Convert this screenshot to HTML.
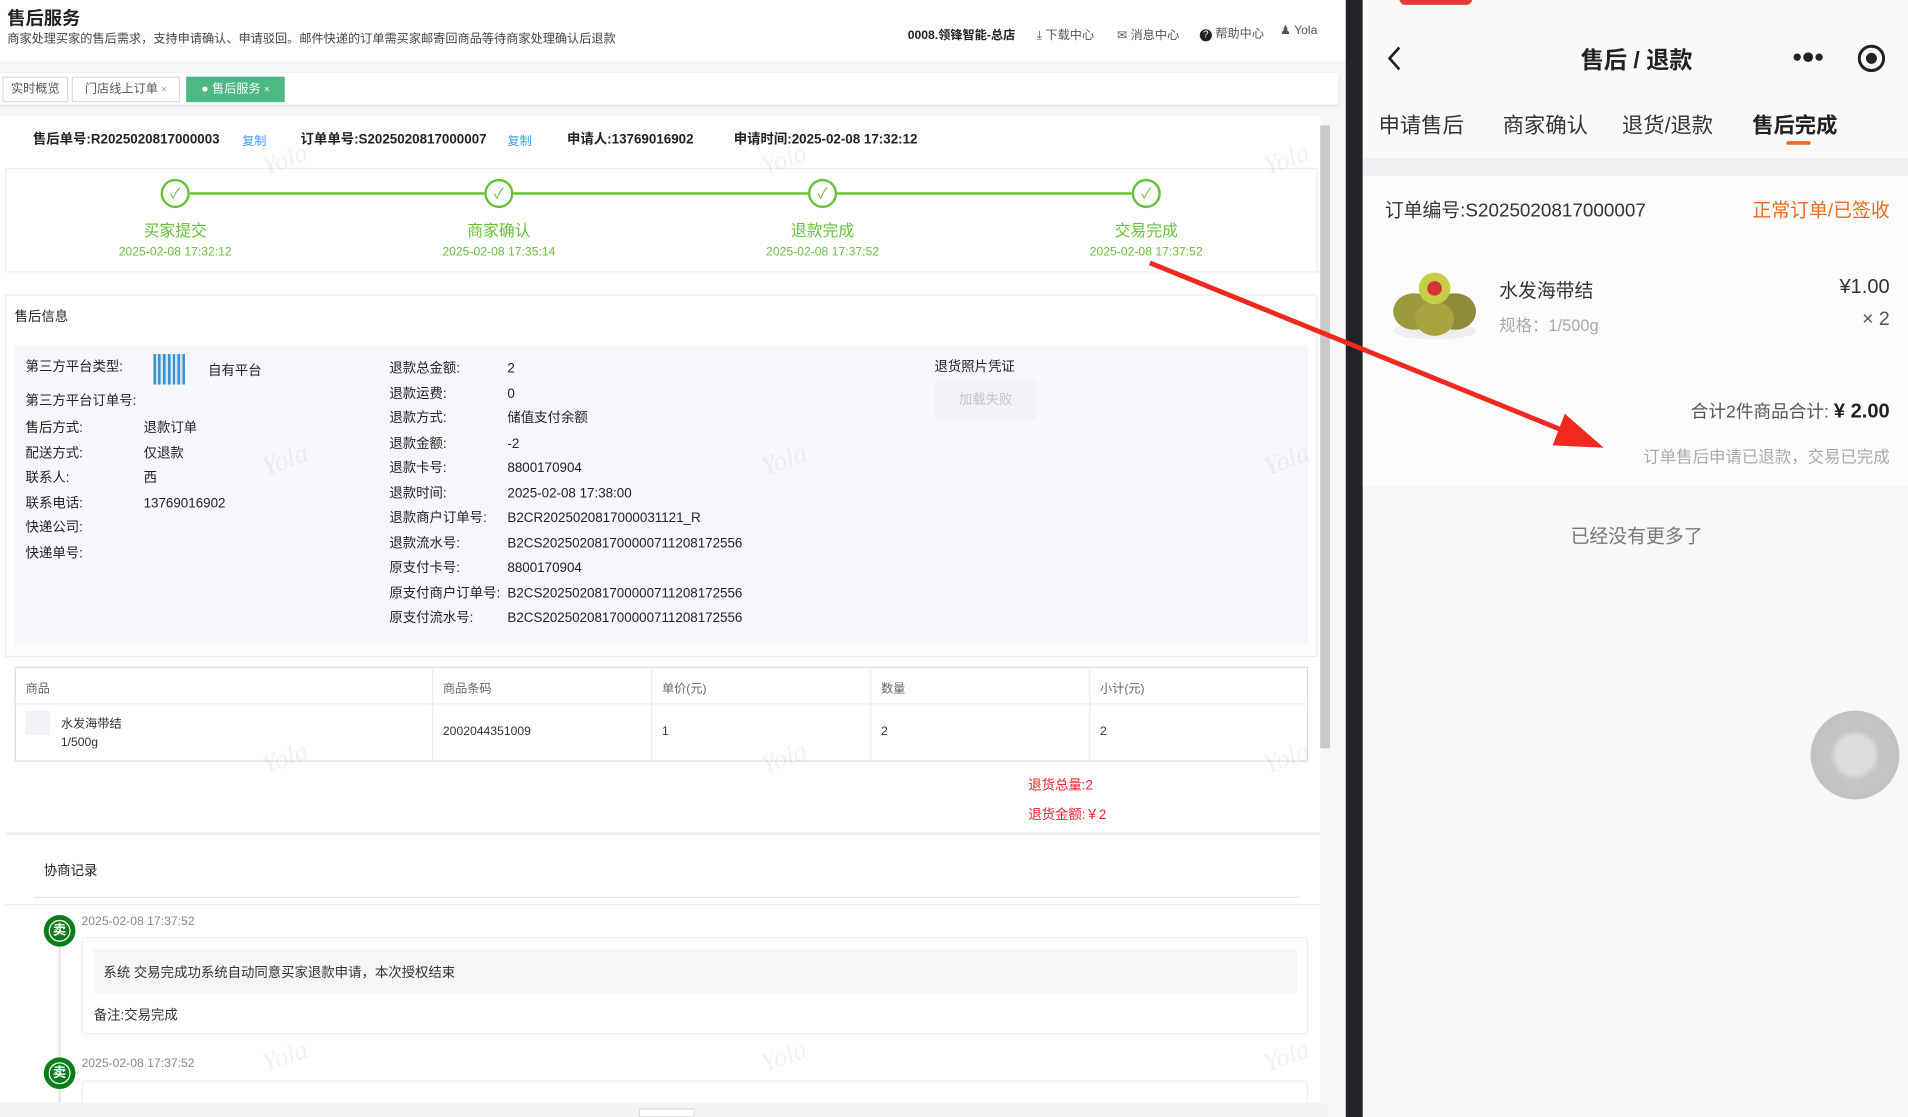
<!DOCTYPE html>
<html><head><meta charset="utf-8">
<style>
*{margin:0;padding:0;box-sizing:border-box}
html,body{width:1908px;height:1117px;overflow:hidden;background:#fff}
#w{position:absolute;left:0;top:0;width:1568px;height:918px;transform:scale(1.2168);transform-origin:0 0;font-family:"Liberation Sans","Noto Sans CJK SC",sans-serif;color:#333}
.a{position:absolute;white-space:nowrap}
.s10{font-size:10px}.s11{font-size:11px}
.g{color:#67c23a}
.wm{position:absolute;color:rgba(0,0,0,0.05);font:italic 22px "Liberation Serif",serif;transform:rotate(-20deg)}
</style></head><body><div id="w">
<div class="a" style="left:0;top:0;width:1106px;height:918px;background:#f5f6f8"></div>
<div class="a" style="left:0;top:0;width:1106px;height:50px;background:#fff"></div>
<div class="a" style="left:6px;top:4px;font-size:15px;font-weight:bold;color:#222">售后服务</div>
<div class="a s10" style="left:6px;top:23px;color:#444">商家处理买家的售后需求，支持申请确认、申请驳回。邮件快递的订单需买家邮寄回商品等待商家处理确认后退款</div>
<div class="a s10" style="left:746px;top:20px;font-weight:bold;color:#222">0008.领锋智能-总店</div>
<div class="a s10" style="left:852px;top:20px;color:#555">⤓ 下载中心</div>
<div class="a s10" style="left:918px;top:20px;color:#555">✉ 消息中心</div>
<div class="a s10" style="left:986px;top:19px;color:#555"><span style="display:inline-block;width:10px;height:10px;border-radius:50%;background:#222;color:#fff;font-size:8px;text-align:center;line-height:10px">?</span> 帮助中心</div>
<div class="a s10" style="left:1052px;top:20px;color:#555">♟ Yola</div>
<div class="a" style="left:0;top:60px;width:1100px;height:26px;background:#fff;box-shadow:0 1px 3px rgba(0,0,0,.1)"></div>
<div class="a s10" style="left:2px;top:63px;width:54px;height:21px;border:1px solid #ddd;line-height:19px;text-align:center;color:#555">实时概览</div>
<div class="a s10" style="left:59px;top:63px;width:89px;height:21px;border:1px solid #ddd;line-height:19px;text-align:center;color:#555">门店线上订单 <span style="font-size:8px;color:#999">×</span></div>
<div class="a s10" style="left:153px;top:63px;width:81px;height:21px;background:#4cb884;line-height:21px;text-align:center;color:#fff">● 售后服务 <span style="font-size:8px">×</span></div>
<div class="a" style="left:0;top:95px;width:1085px;height:811px;background:#fff"></div>
<div class="a" style="left:1085px;top:103px;width:8px;height:512px;background:#c8c8c8"></div>
<div class="a s11" style="left:27px;top:106px;font-weight:bold;color:#222">售后单号:R2025020817000003</div>
<div class="a s10" style="left:199px;top:107px;color:#409eff">复制</div>
<div class="a s11" style="left:247px;top:106px;font-weight:bold;color:#222">订单单号:S2025020817000007</div>
<div class="a s10" style="left:417px;top:107px;color:#409eff">复制</div>
<div class="a s11" style="left:466px;top:106px;font-weight:bold;color:#222">申请人:13769016902</div>
<div class="a s11" style="left:603px;top:106px;font-weight:bold;color:#222">申请时间:2025-02-08 17:32:12</div>
<div class="a" style="left:4px;top:138px;width:1079px;height:86px;border:1px solid #eceef2"></div>
<div class="a" style="left:156px;top:158px;width:242px;height:2px;background:#67c23a"></div>
<div class="a" style="left:422px;top:158px;width:242px;height:2px;background:#67c23a"></div>
<div class="a" style="left:688px;top:158px;width:242px;height:2px;background:#67c23a"></div>
<div class="a" style="left:132px;top:147px;width:24px;height:24px;border:2px solid #67c23a;border-radius:50%;background:#fff;color:#67c23a;text-align:center;line-height:20px;font-size:12px">✓</div>
<div class="a" style="left:398px;top:147px;width:24px;height:24px;border:2px solid #67c23a;border-radius:50%;background:#fff;color:#67c23a;text-align:center;line-height:20px;font-size:12px">✓</div>
<div class="a" style="left:664px;top:147px;width:24px;height:24px;border:2px solid #67c23a;border-radius:50%;background:#fff;color:#67c23a;text-align:center;line-height:20px;font-size:12px">✓</div>
<div class="a" style="left:930px;top:147px;width:24px;height:24px;border:2px solid #67c23a;border-radius:50%;background:#fff;color:#67c23a;text-align:center;line-height:20px;font-size:12px">✓</div>
<div class="a g" style="left:94px;top:179px;width:100px;text-align:center;font-size:13px">买家提交</div>
<div class="a g" style="left:360px;top:179px;width:100px;text-align:center;font-size:13px">商家确认</div>
<div class="a g" style="left:626px;top:179px;width:100px;text-align:center;font-size:13px">退款完成</div>
<div class="a g" style="left:892px;top:179px;width:100px;text-align:center;font-size:13px">交易完成</div>
<div class="a g" style="left:84px;top:202px;width:120px;text-align:center;font-size:10px">2025-02-08 17:32:12</div>
<div class="a g" style="left:350px;top:202px;width:120px;text-align:center;font-size:10px">2025-02-08 17:35:14</div>
<div class="a g" style="left:616px;top:202px;width:120px;text-align:center;font-size:10px">2025-02-08 17:37:52</div>
<div class="a g" style="left:882px;top:202px;width:120px;text-align:center;font-size:10px">2025-02-08 17:37:52</div>
<div class="a" style="left:4px;top:242px;width:1079px;height:298px;border:1px solid #eceef2"></div>
<div class="a s11" style="left:12px;top:252px;color:#222">售后信息</div>
<div class="a" style="left:12px;top:284px;width:1063px;height:246px;background:#f5f7fa"></div>
<div class="a s11" style="left:21px;top:293px;color:#222">第三方平台类型:</div>
<div class="a s11" style="left:21px;top:321px;color:#222">第三方平台订单号:</div>
<div class="a s11" style="left:21px;top:342px;line-height:20.5px;color:#222">售后方式:<br>配送方式:<br>联系人:<br>联系电话:<br>快递公司:<br>快递单号:</div>
<div class="a" style="left:126px;top:291px;width:26px;height:25px;background:repeating-linear-gradient(90deg,#3a8fd0 0 2px,#cfe4f5 2px 4px)"></div>
<div class="a s11" style="left:171px;top:296px;color:#222">自有平台</div>
<div class="a s11" style="left:118px;top:342px;line-height:20.5px;color:#222">退款订单<br>仅退款<br>西<br>13769016902</div>
<div class="a s11" style="left:320px;top:293px;line-height:20.5px;color:#222">退款总金额:<br>退款运费:<br>退款方式:<br>退款金额:<br>退款卡号:<br>退款时间:<br>退款商户订单号:<br>退款流水号:<br>原支付卡号:<br>原支付商户订单号:<br>原支付流水号:</div>
<div class="a s11" style="left:417px;top:293px;line-height:20.5px;color:#222">2<br>0<br>储值支付余额<br>-2<br>8800170904<br>2025-02-08 17:38:00<br>B2CR2025020817000031121_R<br>B2CS202502081700000711208172556<br>8800170904<br>B2CS202502081700000711208172556<br>B2CS202502081700000711208172556</div>
<div class="a s11" style="left:768px;top:293px;color:#222">退货照片凭证</div>
<div class="a s11" style="left:768px;top:313px;width:84px;height:32px;background:#f0f2f5;color:#c0c4cc;text-align:center;line-height:32px">加载失败</div>
<div class="a" style="left:12px;top:548px;width:1063px;height:78px;border:1px solid #dcdfe6"></div>
<div class="a" style="left:12px;top:578px;width:1063px;height:1px;background:#ebeef5"></div>
<div class="a" style="left:355px;top:548px;width:1px;height:78px;background:#ebeef5"></div>
<div class="a" style="left:535px;top:548px;width:1px;height:78px;background:#ebeef5"></div>
<div class="a" style="left:715px;top:548px;width:1px;height:78px;background:#ebeef5"></div>
<div class="a" style="left:895px;top:548px;width:1px;height:78px;background:#ebeef5"></div>
<div class="a s10" style="left:21px;top:557px;color:#666">商品</div>
<div class="a s10" style="left:364px;top:557px;color:#666">商品条码</div>
<div class="a s10" style="left:544px;top:557px;color:#666">单价(元)</div>
<div class="a s10" style="left:724px;top:557px;color:#666">数量</div>
<div class="a s10" style="left:904px;top:557px;color:#666">小计(元)</div>
<div class="a" style="left:21px;top:584px;width:20px;height:20px;background:#f2f4f7"></div>
<div class="a s10" style="left:50px;top:586px;color:#333">水发海带结</div>
<div class="a s10" style="left:50px;top:605px;color:#333">1/500g</div>
<div class="a s10" style="left:364px;top:596px;color:#333">2002044351009</div>
<div class="a s10" style="left:544px;top:596px;color:#333">1</div>
<div class="a s10" style="left:724px;top:596px;color:#333">2</div>
<div class="a s10" style="left:904px;top:596px;color:#333">2</div>
<div class="a s11" style="left:845px;top:637px;color:#f5222d">退货总量:2</div>
<div class="a s11" style="left:845px;top:661px;color:#f5222d">退货金额:￥2</div>
<div class="a" style="left:4px;top:684px;width:1081px;height:2px;background:#eceef2"></div>
<div class="a s11" style="left:36px;top:707px;color:#222">协商记录</div>
<div class="a" style="left:28px;top:737px;width:1040px;height:1px;background:#e4e7ed"></div>
<div class="a" style="left:4px;top:743px;width:1081px;height:1px;background:#eceef2"></div>
<div class="a" style="left:48px;top:764px;width:2px;height:150px;background:#e4e7ed"></div>
<div class="a" style="left:36px;top:752px;width:26px;height:26px;border-radius:50%;background:#0a7d1a;color:#fff;font-size:11px;font-weight:bold;text-align:center;line-height:26px"><span style="display:inline-block;width:18px;height:18px;border:1px solid #fff;border-radius:50%;line-height:16px">卖</span></div>
<div class="a s10" style="left:67px;top:752px;color:#888">2025-02-08 17:37:52</div>
<div class="a" style="left:67px;top:770px;width:1008px;height:80px;border:1px solid #ebeef5;border-radius:3px;background:#fff"></div>
<div class="a" style="left:77px;top:780px;width:989px;height:36px;background:#f5f6f8"></div>
<div class="a s11" style="left:85px;top:791px;color:#333">系统 交易完成功系统自动同意买家退款申请，本次授权结束</div>
<div class="a s11" style="left:77px;top:826px;color:#333">备注:交易完成</div>
<div class="a" style="left:36px;top:869px;width:26px;height:26px;border-radius:50%;background:#0a7d1a;color:#fff;font-size:11px;font-weight:bold;text-align:center;line-height:26px"><span style="display:inline-block;width:18px;height:18px;border:1px solid #fff;border-radius:50%;line-height:16px">卖</span></div>
<div class="a s10" style="left:67px;top:869px;color:#888">2025-02-08 17:37:52</div>
<div class="a" style="left:67px;top:888px;width:1008px;height:30px;border:1px solid #ebeef5;border-radius:3px;background:#fff"></div>
<div class="a" style="left:0;top:906px;width:1093px;height:12px;background:#f4f4f5"></div>
<div class="a" style="left:525px;top:911px;width:46px;height:7px;background:#fff;border:1px solid #ddd"></div>
<div class="wm" style="left:215px;top:118px">Yola</div><div class="wm" style="left:625px;top:118px">Yola</div><div class="wm" style="left:1038px;top:118px">Yola</div>
<div class="wm" style="left:215px;top:365px">Yola</div><div class="wm" style="left:625px;top:365px">Yola</div><div class="wm" style="left:1038px;top:365px">Yola</div>
<div class="wm" style="left:215px;top:610px">Yola</div><div class="wm" style="left:625px;top:610px">Yola</div><div class="wm" style="left:1038px;top:610px">Yola</div>
<div class="wm" style="left:215px;top:855px">Yola</div><div class="wm" style="left:625px;top:855px">Yola</div><div class="wm" style="left:1038px;top:855px">Yola</div>
<div class="a" style="left:1106px;top:0;width:14px;height:918px;background:#222326"></div>
<div class="a" style="left:1120px;top:0;width:448px;height:918px;background:#f7f7f9"></div>
<div class="a" style="left:1120px;top:0;width:448px;height:130px;background:#fafafa"></div>
<div class="a" style="left:1150px;top:-6px;width:60px;height:10px;border-radius:5px;background:#e8393a"></div>
<svg class="a" style="left:1138px;top:36px" width="16" height="24"><path d="M12 3 L4 12 L12 21" stroke="#222" stroke-width="2.2" fill="none"/></svg>
<div class="a" style="left:1245px;top:35px;width:200px;text-align:center;font-size:19px;font-weight:bold;color:#222">售后 / 退款</div>
<svg class="a" style="left:1472px;top:40px" width="28" height="14"><circle cx="5" cy="7" r="3" fill="#222"/><circle cx="14" cy="7" r="4" fill="#222"/><circle cx="23" cy="7" r="3" fill="#222"/></svg>
<svg class="a" style="left:1525px;top:35px" width="26" height="26"><circle cx="13" cy="13" r="10" stroke="#222" stroke-width="2.5" fill="none"/><circle cx="13" cy="13" r="4.5" fill="#222"/></svg>
<div class="a" style="left:1133px;top:90px;font-size:17.5px;color:#333">申请售后</div>
<div class="a" style="left:1235px;top:90px;font-size:17.5px;color:#333">商家确认</div>
<div class="a" style="left:1333px;top:90px;font-size:17.5px;color:#333">退货/退款</div>
<div class="a" style="left:1440px;top:90px;font-size:17.5px;font-weight:bold;color:#222">售后完成</div>
<div class="a" style="left:1468px;top:116px;width:20px;height:3px;background:#f06a1e;border-radius:2px"></div>
<div class="a" style="left:1120px;top:130px;width:448px;height:15px;background:#f0f0f2"></div>
<div class="a" style="left:1120px;top:145px;width:448px;height:255px;background:#fcfcfd"></div>
<div class="a" style="left:1138px;top:161px;font-size:15.5px;color:#333">订单编号:S2025020817000007</div>
<div class="a" style="left:1400px;top:161px;width:153px;text-align:right;font-size:15.5px;color:#f06a1e">正常订单/已签收</div>
<svg class="a" style="left:1140px;top:220px" width="78" height="62"><ellipse cx="39" cy="52" rx="34" ry="7" fill="#eee"/><ellipse cx="22" cy="36" rx="17" ry="15" fill="#9a9a3a"/><ellipse cx="56" cy="36" rx="17" ry="15" fill="#8f8a35"/><ellipse cx="39" cy="42" rx="16" ry="14" fill="#a8a33f"/><circle cx="39" cy="17" r="13" fill="#c8cd48"/><circle cx="39" cy="17" r="6" fill="#d8333a"/></svg>
<div class="a" style="left:1232px;top:227px;font-size:15.5px;color:#333">水发海带结</div>
<div class="a" style="left:1232px;top:256px;font-size:13.5px;color:#aaa">规格：1/500g</div>
<div class="a" style="left:1450px;top:227px;width:103px;text-align:right;font-size:16.5px;color:#333">¥1.00</div>
<div class="a" style="left:1450px;top:254px;width:103px;text-align:right;font-size:16px;color:#555">× 2</div>
<div class="a" style="left:1300px;top:327px;width:253px;text-align:right;font-size:14.5px;color:#555">合计2件商品合计: <b style="font-size:16.5px;color:#222">¥ 2.00</b></div>
<div class="a" style="left:1300px;top:364px;width:253px;text-align:right;font-size:13.5px;color:#aaa">订单售后申请已退款，交易已完成</div>
<div class="a" style="left:1245px;top:429px;width:200px;text-align:center;font-size:15.5px;color:#777">已经没有更多了</div>
<div class="a" style="left:1488px;top:584px;width:73px;height:73px;border-radius:50%;background:radial-gradient(circle,#ddd 0 30%,#c4c4c6 40%,#c0c0c2 100%)"></div>
<svg class="a" style="left:0;top:0" width="1568" height="918"><line x1="945" y1="216" x2="1295" y2="358" stroke="#f2271d" stroke-width="4"/><polygon points="1318,368 1286,340 1276,366" fill="#f2271d"/></svg>
</div></body></html>
